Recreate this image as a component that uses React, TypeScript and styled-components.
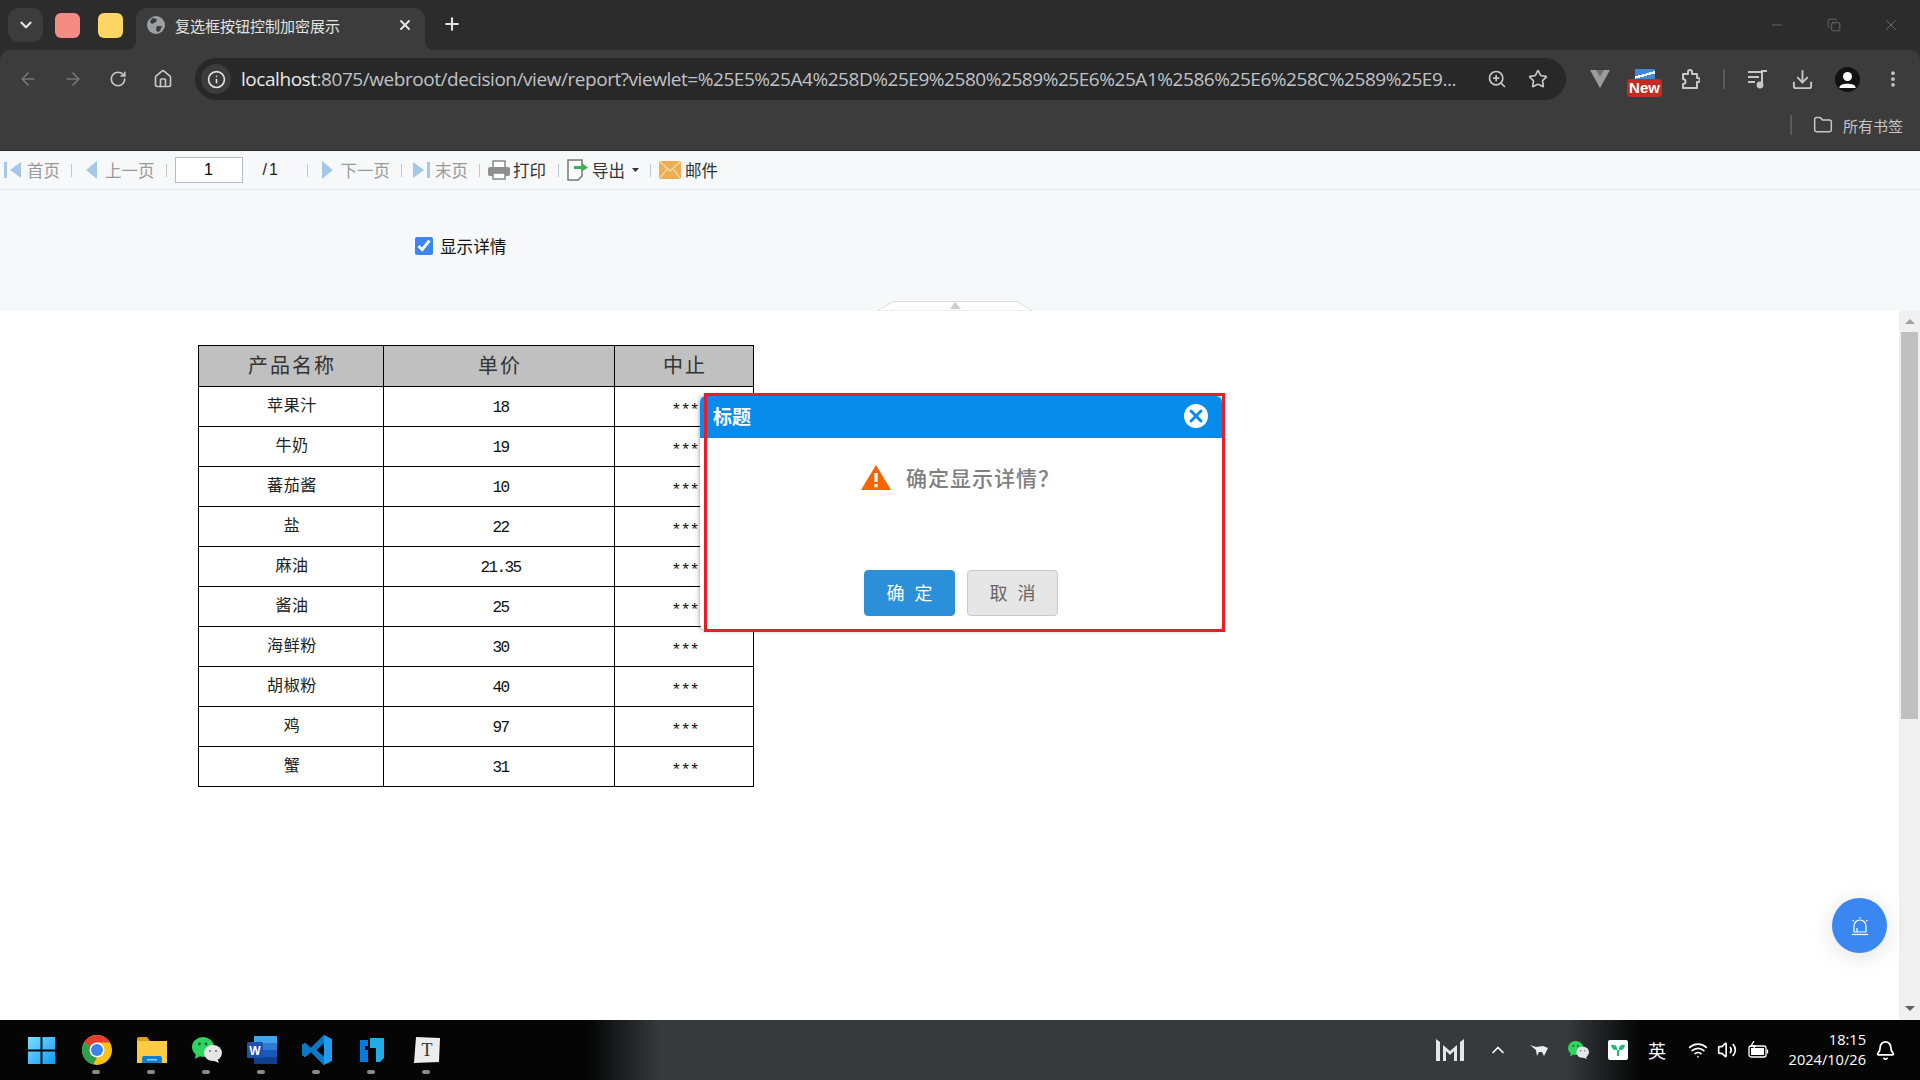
import React from "react";
import styled, { createGlobalStyle } from "styled-components";
import {
  ArrowLeft,
  ArrowRight,
  Bell,
  ChevronDown,
  ChevronUp,
  Copy,
  Download,
  Folder,
  House,
  Info,
  Minus,
  MoreVertical,
  Plus,
  RotateCw,
  Star,
  Volume2,
  Wifi,
  X,
  ZoomIn,
} from "lucide-react";

const CJK = `"Noto Sans CJK SC", "Noto Sans", sans-serif`;

const GlobalStyle = createGlobalStyle`
  html, body { margin: 0; padding: 0; background: #fff; }
  body { font-family: ${CJK}; }
  * { box-sizing: border-box; }
`;

const Page = styled.div`
  width: 1920px;
  height: 1080px;
  overflow: hidden;
  display: flex;
  flex-direction: column;
  background: #2c2c2c;
`;

/* browser chrome */
const TabStrip = styled.div`
  height: 50px;
  background: #2c2c2c;
  display: flex;
  align-items: flex-start;
  padding: 8px 0 0 8px;
`;
const TabSearch = styled.div`
  width: 35px;
  height: 34px;
  border-radius: 11px;
  background: #3c3c3c;
  color: #e3e3e3;
  display: flex;
  align-items: center;
  justify-content: center;
`;
const PinnedTile = styled.div<{ $color: string }>`
  width: 25px;
  height: 25px;
  margin: 5px 0 0 ${(p) => (p.$color === "#f58b85" ? 12 : 18)}px;
  border-radius: 6px;
  background: ${(p) => p.$color};
`;
const Tab = styled.div`
  width: 289px;
  height: 42px;
  margin-left: 13px;
  padding: 0 12px 8px 11px;
  border-radius: 11px 11px 0 0;
  background: #3c3c3c;
  color: #e3e3e3;
  display: flex;
  align-items: center;
  font-size: 15px;
  white-space: nowrap;
  position: relative;
  &::before,
  &::after {
    content: "";
    position: absolute;
    bottom: 0;
    width: 10px;
    height: 10px;
  }
  &::before {
    left: -10px;
    background: radial-gradient(circle at 0 0, #2c2c2c 10px, #3c3c3c 10.5px);
  }
  &::after {
    right: -10px;
    background: radial-gradient(circle at 100% 0, #2c2c2c 10px, #3c3c3c 10.5px);
  }
`;
const TabTitle = styled.span`
  margin-left: 10px;
  flex: 1;
`;
const NewTab = styled.div`
  margin: 6px 0 0 17px;
  color: #e3e3e3;
  display: flex;
`;
const WindowControls = styled.div`
  margin-left: auto;
  display: flex;
  color: #808080;
  padding-right: 1px;
`;
const WindowButton = styled.div`
  width: 57px;
  height: 34px;
  display: flex;
  align-items: center;
  justify-content: center;
`;

const NavBar = styled.div`
  height: 50px;
  background: #3c3c3c;
  display: flex;
  align-items: flex-start;
  padding: 8px 0 0 5px;
  border-radius: 10px 10px 0 0;
`;
const NavButton = styled.div<{ $dim?: boolean; $w?: number }>`
  width: ${(p) => p.$w ?? 45}px;
  height: 42px;
  flex-shrink: 0;
  display: flex;
  align-items: center;
  justify-content: center;
  color: ${(p) => (p.$dim ? "#757575" : "#c7c7c7")};
  position: relative;
`;
const UrlBar = styled.div`
  width: 1371px;
  height: 42px;
  margin: 0 11px 0 10px;
  flex-shrink: 0;
  border-radius: 21px;
  background: #282828;
  display: flex;
  align-items: center;
  padding: 0 8px 0 6px;
  color: #c7c7c7;
`;
const InfoChip = styled.div`
  width: 30px;
  height: 30px;
  flex-shrink: 0;
  border-radius: 50%;
  background: #3c3c3c;
  color: #e3e3e3;
  display: flex;
  align-items: center;
  justify-content: center;
`;
const UrlText = styled.div`
  margin-left: 10px;
  width: 1235px;
  flex-shrink: 0;
  white-space: nowrap;
  font-family: "Open Sans", sans-serif;
  font-size: 19px;
  letter-spacing: -0.45px;
  color: #bfc3c7;
  b {
    font-weight: 400;
    color: #e8e8e8;
  }
`;
const UrlAction = styled.div`
  width: 41px;
  display: flex;
  justify-content: center;
  flex-shrink: 0;
`;
const NavDivider = styled.div`
  width: 2px;
  height: 20px;
  background: #5a5a5a;
`;
const NewBadge = styled.div`
  position: absolute;
  left: 5px;
  top: 21px;
  width: 35px;
  height: 18px;
  border-radius: 4px;
  background: #c42b22;
  color: #fff;
  font-family: "Liberation Sans", sans-serif;
  font-weight: 700;
  font-size: 15px;
  line-height: 18px;
  text-align: center;
`;
const BadgeImage = styled.div`
  position: absolute;
  left: 13px;
  top: 11px;
  width: 20px;
  height: 11px;
  background: linear-gradient(165deg, #3b8ad9 45%, #fff 45%, #fff 60%, #3b8ad9 60%);
`;
const Avatar = styled.div`
  width: 25px;
  height: 25px;
  border-radius: 50%;
  background: #111;
  overflow: hidden;
`;

const BookmarkBar = styled.div`
  height: 51px;
  background: #3c3c3c;
  border-bottom: 1px solid #2c2c2c;
  display: flex;
  align-items: center;
  justify-content: flex-end;
  color: #c7c7c7;
  padding-right: 17px;
  font-size: 15px;
`;
const BookmarkDivider = styled.div`
  width: 2px;
  height: 20px;
  background: #5a5a5a;
  margin-right: 21px;
`;
const BookmarkLabel = styled.span`
  margin-left: 10px;
`;

/* report toolbar */
const ReportToolbar = styled.div`
  height: 39px;
  flex-shrink: 0;
  background: #f7f8fa;
  border-bottom: 1px solid #e6e7ea;
  display: flex;
  align-items: center;
  padding-left: 4px;
  font-size: 16.5px;
`;
const ToolItem = styled.div<{ $gap: number; $off?: boolean }>`
  display: flex;
  align-items: center;
  gap: ${(p) => p.$gap}px;
  color: ${(p) => (p.$off ? "#9a9a9a" : "#333")};
  white-space: nowrap;
`;
const ToolCaret = styled.svg`
  margin-left: 4px;
`;
const ToolSep = styled.div<{ $l: number; $r: number }>`
  width: 1px;
  height: 13px;
  background: #c4c6ca;
  margin: 0 ${(p) => p.$r}px 0 ${(p) => p.$l}px;
`;
const PageInput = styled.div`
  width: 68px;
  height: 26px;
  border: 1px solid #b4bacf;
  background: #fff;
  color: #000;
  font-family: "Liberation Sans", sans-serif;
  font-size: 16px;
  line-height: 24px;
  text-align: center;
`;
const PageTotal = styled.div`
  margin-left: 20px;
  width: 16px;
  color: #222;
  font-family: "Liberation Sans", sans-serif;
  font-size: 16px;
  letter-spacing: 2px;
`;

const ParamPane = styled.div`
  height: 121px;
  flex-shrink: 0;
  background: #f7f8fa;
  position: relative;
  padding: 47px 0 0 415px;
  display: flex;
  align-items: flex-start;
`;
const CheckField = styled.label`
  display: flex;
  align-items: center;
  gap: 7px;
  height: 18px;
  font-size: 16.6px;
  color: #111;
  input {
    width: 18px;
    height: 18px;
    margin: 0;
    accent-color: #3b87f2;
  }
`;
const CollapseHandle = styled.div`
  position: absolute;
  left: 877px;
  bottom: 0;
  height: 10px;
  display: flex;
`;

/* report */
const ReportArea = styled.div`
  flex: 1;
  min-height: 0;
  display: flex;
  background: #fff;
`;
const Canvas = styled.div`
  flex: 1;
  position: relative;
  padding: 34px 0 0 198px;
`;
const DataTable = styled.table`
  border-collapse: collapse;
  table-layout: fixed;
  width: 555px;
`;
const HeadCell = styled.th<{ $w: number }>`
  width: ${(p) => p.$w}px;
  height: 41px;
  padding: 0 0 3px 2px;
  border: 1px solid #000;
  background: #c0c0c0;
  font-weight: 400;
  font-size: 20px;
  letter-spacing: 2px;
  color: #333;
`;
const BodyCell = styled.td<{ $kind?: "num" | "mask" }>`
  height: 40px;
  border: 1px solid #000;
  text-align: center;
  color: ${(p) => (p.$kind ? "#111" : "#222")};
  font-family: ${(p) => (p.$kind ? `"Liberation Mono", monospace` : CJK)};
  font-size: ${(p) => (p.$kind === "mask" ? 17 : 16)}px;
  letter-spacing: ${(p) => (p.$kind === "mask" ? -1 : p.$kind === "num" ? -1.6 : 0.6)}px;
  padding: ${(p) => (p.$kind === "mask" ? "7px 0 0 2px" : p.$kind === "num" ? "2px 0 0 3px" : "0 0 6px 2px")};
`;
const Scrollbar = styled.div`
  width: 21px;
  flex-shrink: 0;
  background: #f0f0f0;
  display: flex;
  flex-direction: column;
  align-items: center;
`;
const ScrollArrow = styled.div<{ $down?: boolean }>`
  height: 21px;
  flex-shrink: 0;
  display: flex;
  align-items: center;
  justify-content: center;
  margin-top: ${(p) => (p.$down ? "auto" : 0)};
  padding-bottom: ${(p) => (p.$down ? 2 : 0)}px;
  &::before {
    content: "";
    border-left: 5px solid transparent;
    border-right: 5px solid transparent;
    border-bottom: ${(p) => (p.$down ? "0" : "5px solid #a0a0a0")};
    border-top: ${(p) => (p.$down ? "5px solid #606060" : "0")};
  }
`;
const ScrollThumb = styled.div`
  width: 17px;
  height: 387px;
  background: #c0c0c0;
`;
const Fab = styled.div`
  position: absolute;
  left: 1832px;
  top: 587px;
  width: 55px;
  height: 55px;
  border-radius: 50%;
  background: #3b87f2;
  box-shadow: 0 4px 24px rgba(0, 0, 0, 0.12);
  display: flex;
  align-items: center;
  justify-content: center;
`;

/* dialog */
const Dialog = styled.div`
  position: absolute;
  left: 700px;
  top: 85px;
  width: 522px;
  height: 234px;
  background: #fff;
  border-radius: 6px;
  box-shadow: 0 0 5px rgba(0, 0, 0, 0.45);
  display: flex;
  flex-direction: column;
  overflow: hidden;
`;
const DialogHeader = styled.div`
  height: 42px;
  flex-shrink: 0;
  background: #078cec;
  color: #fff;
  font-weight: 700;
  font-size: 19px;
  padding: 0 14px 3px 13px;
  display: flex;
  align-items: center;
  justify-content: space-between;
`;
const CloseDisc = styled.div`
  width: 24px;
  height: 24px;
  border-radius: 50%;
  background: #fff;
  color: #078cec;
  display: flex;
  align-items: center;
  justify-content: center;
`;
const MessageRow = styled.div`
  display: flex;
  align-items: center;
  gap: 15px;
  padding: 24px 0 0 161px;
  font-size: 21px;
  letter-spacing: 1px;
  font-weight: 500;
  color: #808080;
`;
const DialogActions = styled.div`
  margin-top: auto;
  padding: 0 0 14px 164px;
  display: flex;
  gap: 12px;
`;
const DialogButton = styled.div<{ $primary?: boolean }>`
  width: 91px;
  height: 46px;
  border-radius: 4px;
  border: 1px solid ${(p) => (p.$primary ? "#2b90d9" : "#c8c8c8")};
  background: ${(p) => (p.$primary ? "#2b90d9" : "#e6e6e6")};
  color: ${(p) => (p.$primary ? "#fff" : "#666")};
  font-size: 18px;
  letter-spacing: 3px;
  padding: 0 0 2px 3px;
  display: flex;
  align-items: center;
  justify-content: center;
`;
const RedFrame = styled.div`
  position: absolute;
  left: 704px;
  top: 82px;
  width: 521px;
  height: 239px;
  border: 3px solid #ee1c25;
  pointer-events: none;
`;

/* taskbar */
const Taskbar = styled.div`
  height: 60px;
  flex-shrink: 0;
  display: flex;
  align-items: stretch;
  padding-left: 14px;
  color: #fff;
  background: linear-gradient(
    90deg,
    #050505 0,
    #050505 588px,
    #363a3d 660px,
    #363a3d 1567px,
    #050505 1640px
  );
`;
const AppSlot = styled.div<{ $running?: boolean }>`
  width: 55px;
  position: relative;
  display: flex;
  align-items: center;
  justify-content: center;
  &::after {
    content: "";
    display: ${(p) => (p.$running ? "block" : "none")};
    position: absolute;
    left: 23px;
    bottom: 6px;
    width: 8px;
    height: 4px;
    border-radius: 2px;
    background: #8a8a8a;
  }
`;
const Tray = styled.div`
  margin-left: auto;
  display: flex;
  align-items: center;
`;
const TraySlot = styled.div<{ $w: number }>`
  width: ${(p) => p.$w}px;
  display: flex;
  justify-content: center;
  font-size: 18px;
  line-height: 1;
`;
const Clock = styled.div`
  width: 90px;
  margin: 0 0 3px 2px;
  text-align: right;
  font-family: "Open Sans", sans-serif;
  font-size: 14.6px;
  line-height: 20px;
`;

const Triangle = ({ dir, bar }: { dir: "l" | "r"; bar?: boolean }) => (
  <svg width={bar ? 17 : 11} height="18" viewBox={bar ? "0 0 17 18" : "0 0 11 18"}>
    {bar && <rect x={dir === "l" ? 0 : 14} y="1" width="3" height="16" fill="#a6c8e8" />}
    {dir === "l" ? (
      <path d={bar ? "M17 1 L6 9 L17 17Z" : "M11 0 L0 9 L11 18Z"} fill="#a6c8e8" />
    ) : (
      <path d={bar ? "M0 1 L11 9 L0 17Z" : "M0 0 L11 9 L0 18Z"} fill="#a6c8e8" />
    )}
  </svg>
);

const PrintIcon = () => (
  <svg width="22" height="20" viewBox="0 0 22 20">
    <rect x="5" y="1" width="12" height="7" fill="#fff" stroke="#8f8f8f" strokeWidth="1.6" />
    <rect x="0" y="7" width="22" height="9" rx="2" fill="#8f8f8f" />
    <rect x="5" y="13" width="12" height="6" fill="#fff" stroke="#8f8f8f" strokeWidth="1.6" />
  </svg>
);
const ExportIcon = () => (
  <svg width="22" height="22" viewBox="0 0 22 22">
    <path d="M1 1 H15 V17 L11 21 H1Z" fill="#fff" stroke="#777" strokeWidth="1.5" />
    <path d="M7 7 H14 V3.5 L21 8.5 L14 13 V10 H7Z" fill="#3fb156" />
  </svg>
);
const MailIcon = () => (
  <svg width="22" height="18" viewBox="0 0 22 18">
    <rect width="22" height="18" rx="2" fill="#ecad55" />
    <path d="M1 1 L11 10 L21 1 M1 17 L8 8 M21 17 L14 8" fill="none" stroke="#f8dfb7" strokeWidth="1.2" />
  </svg>
);
const WarnIcon = () => (
  <svg width="30" height="25" viewBox="0 0 30 25">
    <path d="M15 0 L30 25 H0Z" fill="#f96400" />
    <rect x="13.4" y="8" width="3.2" height="9" fill="#fff" />
    <rect x="13.4" y="19" width="3.2" height="3.2" fill="#fff" />
  </svg>
);
const Globe = () => (
  <svg width="18" height="18" viewBox="0 0 18 18">
    <circle cx="9" cy="9" r="9" fill="#9aa0a6" />
    <path d="M5 2 L10 3 L9 6 L5 8 L3 6Z M10 10 L15 10 L13 15 L10 16 L9 13Z" fill="#3c3c3c" />
  </svg>
);
const VueMark = () => (
  <svg width="20" height="18" viewBox="0 0 20 18">
    <path d="M0 0 H20 L10 18Z" fill="#9c9c9c" />
    <path d="M6 0 H14 L10 7Z" fill="#6f6f6f" />
  </svg>
);
const ExtensionPiece = () => (
  <svg width="20" height="21" viewBox="0 0 20 21" fill="none" stroke="#c7c7c7" strokeWidth="2" strokeLinejoin="round">
    <path d="M3 5 H8 V3 A2 2 0 0 1 12 3 V5 H17 V9 H18 A2 2 0 0 1 18 13 H17 V19 H3 V15 A2.5 2.5 0 0 0 3 10Z" />
  </svg>
);
const MusicQueue = () => (
  <svg width="20" height="20" viewBox="0 0 20 20" fill="none" stroke="#c7c7c7" strokeWidth="2">
    <path d="M0 3 H13 M0 8 H11 M0 13 H7" />
    <path d="M14 16 V2 H19" />
    <circle cx="12" cy="16" r="2.4" fill="#c7c7c7" />
  </svg>
);
const PersonFace = () => (
  <svg width="25" height="25" viewBox="0 0 25 25" fill="#fff">
    <circle cx="12.5" cy="9.5" r="4.5" />
    <path d="M4.5 20 C5 15.5 20 15.5 20.5 20 V21 H4.5Z" />
  </svg>
);
const Bellhop = () => (
  <svg width="20" height="20" viewBox="0 0 20 20" fill="none" stroke="#fff" strokeWidth="1.2">
    <path d="M4 16 V10 A6 6 0 0 1 16 10 V16Z" />
    <path d="M2 18.5 H18" />
    <path d="M10 1 V2.5 M2.5 4 L3.8 5 M17.5 4 L16.2 5 M7 16 V12" />
  </svg>
);
const WinLogo = () => (
  <svg width="29" height="29" viewBox="0 0 30 30">
    <defs>
      <linearGradient id="win" x1="0" y1="0" x2="1" y2="1">
        <stop offset="0" stopColor="#7fdcff" />
        <stop offset="1" stopColor="#0f9bf5" />
      </linearGradient>
    </defs>
    <path d="M1 1 H14 V14 H1Z M16 1 H29 V14 H16Z M1 16 H14 V29 H1Z M16 16 H29 V29 H16Z" fill="url(#win)" />
  </svg>
);
const ChromeLogo = () => (
  <svg width="30" height="30" viewBox="0 0 30 30">
    <circle cx="15" cy="15" r="15" fill="#fbc116" />
    <path d="M15 0 A15 15 0 0 1 28 7.5 H15 A7.5 7.5 0 0 0 8.5 11.2 L2 7.5 A15 15 0 0 1 15 0Z" fill="#e53d30" />
    <path d="M2 7.5 L8.5 11.2 L15 22.5 L11.2 29.5 A15 15 0 0 1 2 7.5Z" fill="#2e9d4d" />
    <circle cx="15" cy="15" r="7.5" fill="#fff" />
    <circle cx="15" cy="15" r="6" fill="#3b82f0" />
  </svg>
);
const FilesLogo = () => (
  <svg width="30" height="26" viewBox="0 0 30 26">
    <path d="M0 2 Q0 0 2 0 H10 L13 4 H0Z" fill="#dfa20b" />
    <rect y="4" width="30" height="22" fill="#fccb44" />
    <path d="M5 26 V21 Q5 19 7 19 H23 Q25 19 25 21 V26Z" fill="#0f7fd6" />
    <rect x="10" y="22" width="10" height="1.4" fill="#8fd0ff" />
  </svg>
);
const WeChatLogo = ({ size = 30 }: { size?: number }) => (
  <svg width={size} height={(size * 26) / 30} viewBox="0 0 30 26">
    <ellipse cx="11" cy="10" rx="11" ry="10" fill="#2fd35f" />
    <path d="M4 15 L3 22 L10 18Z" fill="#2fd35f" />
    <ellipse cx="21" cy="16" rx="9" ry="8" fill="#e6e6e6" />
    <path d="M25 21 L27 26 L20 23Z" fill="#e6e6e6" />
    <circle cx="7.5" cy="7" r="1.4" fill="#12672e" />
    <circle cx="14" cy="7" r="1.4" fill="#12672e" />
    <circle cx="18" cy="14" r="1.1" fill="#777" />
    <circle cx="24" cy="14" r="1.1" fill="#777" />
  </svg>
);
const WordLogo = () => (
  <svg width="30" height="28" viewBox="0 0 30 28">
    <rect x="7" y="0" width="23" height="7" fill="#41a5ee" />
    <rect x="7" y="7" width="23" height="7" fill="#2b7cd3" />
    <rect x="7" y="14" width="23" height="7" fill="#185abd" />
    <rect x="7" y="21" width="23" height="7" fill="#103f91" />
    <rect x="0" y="6" width="16" height="16" rx="1.5" fill="#1c51ae" />
    <text x="8" y="19" textAnchor="middle" fontFamily="Liberation Sans" fontWeight="700" fontSize="12" fill="#fff">
      W
    </text>
  </svg>
);
const CodeLogo = () => (
  <svg width="30" height="30" viewBox="0 0 30 30">
    <path d="M22 0 L30 4 V26 L22 30 L9 17 L3 22 L0 20 V10 L3 8 L9 13Z M22 8 L14 15 L22 22Z" fill="#1f9cf0" fillRule="evenodd" />
    <path d="M22 0 L9 13 L3 8 L0 10 V20 L3 22 L9 17 L22 30 V22 L14 15 L22 8Z" fill="#0a78c8" />
  </svg>
);
const FanLogo = () => (
  <svg width="24" height="24" viewBox="0 0 24 24">
    <path d="M0 2 H8 V8 H5 V12 H8 V24 H0Z" fill="#0a7ad6" />
    <path d="M10 0 H24 V20 L20 24 H16 V10 H10Z" fill="#22ace8" />
  </svg>
);
const NoteLogo = () => (
  <svg width="28" height="28" viewBox="0 0 28 28">
    <path d="M3 1 L27 2 L26 26 L1 27Z" fill="#ececec" />
    <text x="14" y="20" textAnchor="middle" fontFamily="Liberation Serif" fontSize="18" fill="#333">
      T
    </text>
  </svg>
);
const TrayM = () => (
  <svg width="28" height="22" viewBox="0 0 28 22" fill="#e6e6e6">
    <path d="M0 0 L4 3 V22 H0Z M24 3 L28 0 V22 H24Z M7 6 L14 12 L21 6 V22 H18 V12 L14 16 L10 12 V22 H7Z" />
  </svg>
);
const TrayWeasel = () => (
  <svg width="18" height="12" viewBox="0 0 18 12" fill="#eee">
    <path d="M0 1 L6 3 L13 2 L18 4 L16 8 L14 12 L12 8 L9 8 L7 12 L6 6Z" />
  </svg>
);
const TrayCloud = () => (
  <svg width="20" height="20" viewBox="0 0 20 20">
    <rect width="20" height="20" rx="2" fill="#fff" />
    <path d="M3 5 Q8 4 9 8 V16 H11 V8 Q12 4 17 5 Q16 10 12.5 10 H7.5 Q4 10 3 5Z" fill="#16c172" />
  </svg>
);
const TrayBattery = () => (
  <svg width="21" height="18" viewBox="0 0 21 18" fill="none" stroke="#fff" strokeWidth="1.3">
    <rect x="1" y="5" width="17" height="11" rx="2" />
    <rect x="3" y="7" width="13" height="7" fill="#fff" stroke="none" />
    <path d="M19.5 8.5 V12.5" />
    <path d="M6 0 L3 5 H7 L5 9" />
  </svg>
);

const ROWS: [string, string][] = [
  ["苹果汁", "18"],
  ["牛奶", "19"],
  ["蕃茄酱", "10"],
  ["盐", "22"],
  ["麻油", "21.35"],
  ["酱油", "25"],
  ["海鲜粉", "30"],
  ["胡椒粉", "40"],
  ["鸡", "97"],
  ["蟹", "31"],
];

const URL_REST =
  ":8075/webroot/decision/view/report?viewlet=%25E5%25A4%258D%25E9%2580%2589%25E6%25A1%2586%25E6%258C%2589%25E9...";

export default function App() {
  return (
    <Page>
      <GlobalStyle />
      <TabStrip>
        <TabSearch>
          <ChevronDown size={18} strokeWidth={3} />
        </TabSearch>
        <PinnedTile $color="#f58b85" />
        <PinnedTile $color="#fdd663" />
        <Tab>
          <Globe />
          <TabTitle>复选框按钮控制加密展示</TabTitle>
          <X size={16} strokeWidth={3} />
        </Tab>
        <NewTab>
          <Plus size={20} strokeWidth={2.5} />
        </NewTab>
        <WindowControls>
          <WindowButton>
            <Minus size={16} strokeWidth={1} />
          </WindowButton>
          <WindowButton>
            <Copy size={14} strokeWidth={1.2} />
          </WindowButton>
          <WindowButton>
            <X size={18} strokeWidth={1} />
          </WindowButton>
        </WindowControls>
      </TabStrip>

      <NavBar>
        <NavButton $dim>
          <ArrowLeft size={20} />
        </NavButton>
        <NavButton $dim>
          <ArrowRight size={20} />
        </NavButton>
        <NavButton>
          <RotateCw size={18} strokeWidth={2.2} />
        </NavButton>
        <NavButton>
          <House size={20} />
        </NavButton>
        <UrlBar>
          <InfoChip>
            <Info size={19} />
          </InfoChip>
          <UrlText>
            <b>localhost</b>
            {URL_REST}
          </UrlText>
          <UrlAction>
            <ZoomIn size={20} />
          </UrlAction>
          <UrlAction>
            <Star size={20} />
          </UrlAction>
        </UrlBar>
        <NavButton>
          <VueMark />
        </NavButton>
        <NavButton>
          <BadgeImage />
          <NewBadge>New</NewBadge>
        </NavButton>
        <NavButton>
          <ExtensionPiece />
        </NavButton>
        <NavButton $w={23}>
          <NavDivider />
        </NavButton>
        <NavButton>
          <MusicQueue />
        </NavButton>
        <NavButton>
          <Download size={23} />
        </NavButton>
        <NavButton>
          <Avatar>
            <PersonFace />
          </Avatar>
        </NavButton>
        <NavButton>
          <MoreVertical size={20} strokeWidth={2.5} />
        </NavButton>
      </NavBar>

      <BookmarkBar>
        <BookmarkDivider />
        <Folder size={20} strokeWidth={1.8} />
        <BookmarkLabel>所有书签</BookmarkLabel>
      </BookmarkBar>

      <ReportToolbar>
        <ToolItem $gap={6} $off>
          <Triangle dir="l" bar />
          首页
        </ToolItem>
        <ToolSep $l={11} $r={14} />
        <ToolItem $gap={8} $off>
          <Triangle dir="l" />
          上一页
        </ToolItem>
        <ToolSep $l={11} $r={8} />
        <PageInput>1</PageInput>
        <PageTotal>/1</PageTotal>
        <ToolSep $l={28} $r={14} />
        <ToolItem $gap={8} $off>
          <Triangle dir="r" />
          下一页
        </ToolItem>
        <ToolSep $l={11} $r={11} />
        <ToolItem $gap={5} $off>
          <Triangle dir="r" bar />
          末页
        </ToolItem>
        <ToolSep $l={11} $r={8} />
        <ToolItem $gap={3}>
          <PrintIcon />
          打印
        </ToolItem>
        <ToolSep $l={12} $r={8} />
        <ToolItem $gap={3}>
          <ExportIcon />
          导出
          <ToolCaret width="7" height="4" viewBox="0 0 7 4">
            <path d="M0 0 H7 L3.5 4Z" fill="#333" />
          </ToolCaret>
        </ToolItem>
        <ToolSep $l={11} $r={8} />
        <ToolItem $gap={4}>
          <MailIcon />
          邮件
        </ToolItem>
      </ReportToolbar>

      <ParamPane>
        <CheckField>
          <input type="checkbox" defaultChecked />
          显示详情
        </CheckField>
        <CollapseHandle>
          <svg width="156" height="10" viewBox="0 0 156 10">
            <path d="M0.5 10 L16 0.5 H140 L155.5 10Z" fill="#fff" stroke="#dcdcdc" />
            <path d="M73 8 L78 1 L84 8Z" fill="#cfcfcf" />
          </svg>
        </CollapseHandle>
      </ParamPane>

      <ReportArea>
        <Canvas>
          <DataTable>
            <thead>
              <tr>
                <HeadCell $w={185}>产品名称</HeadCell>
                <HeadCell $w={231}>单价</HeadCell>
                <HeadCell $w={139}>中止</HeadCell>
              </tr>
            </thead>
            <tbody>
              {ROWS.map(([name, price]) => (
                <tr key={name}>
                  <BodyCell>{name}</BodyCell>
                  <BodyCell $kind="num">{price}</BodyCell>
                  <BodyCell $kind="mask">***</BodyCell>
                </tr>
              ))}
            </tbody>
          </DataTable>

          <Dialog>
            <DialogHeader>
              标题
              <CloseDisc>
                <X size={20} strokeWidth={3.5} />
              </CloseDisc>
            </DialogHeader>
            <MessageRow>
              <WarnIcon />
              确定显示详情？
            </MessageRow>
            <DialogActions>
              <DialogButton $primary>确 定</DialogButton>
              <DialogButton>取 消</DialogButton>
            </DialogActions>
          </Dialog>
          <RedFrame />

          <Fab>
            <Bellhop />
          </Fab>
        </Canvas>
        <Scrollbar>
          <ScrollArrow />
          <ScrollThumb />
          <ScrollArrow $down />
        </Scrollbar>
      </ReportArea>

      <Taskbar>
        <AppSlot>
          <WinLogo />
        </AppSlot>
        <AppSlot $running>
          <ChromeLogo />
        </AppSlot>
        <AppSlot $running>
          <FilesLogo />
        </AppSlot>
        <AppSlot $running>
          <WeChatLogo />
        </AppSlot>
        <AppSlot $running>
          <WordLogo />
        </AppSlot>
        <AppSlot $running>
          <CodeLogo />
        </AppSlot>
        <AppSlot $running>
          <FanLogo />
        </AppSlot>
        <AppSlot $running>
          <NoteLogo />
        </AppSlot>
        <Tray>
          <TraySlot $w={37}>
            <TrayM />
          </TraySlot>
          <TraySlot $w={60}>
            <ChevronUp size={20} />
          </TraySlot>
          <TraySlot $w={22}>
            <TrayWeasel />
          </TraySlot>
          <TraySlot $w={56}>
            <WeChatLogo size={21} />
          </TraySlot>
          <TraySlot $w={24}>
            <TrayCloud />
          </TraySlot>
          <TraySlot $w={54}>英</TraySlot>
          <TraySlot $w={28}>
            <Wifi size={20} />
          </TraySlot>
          <TraySlot $w={30}>
            <Volume2 size={20} />
          </TraySlot>
          <TraySlot $w={32}>
            <TrayBattery />
          </TraySlot>
          <Clock>
            18:15
            <br />
            2024/10/26
          </Clock>
          <TraySlot $w={38}>
            <Bell size={21} />
          </TraySlot>
          <TraySlot $w={16} />
        </Tray>
      </Taskbar>
    </Page>
  );
}
